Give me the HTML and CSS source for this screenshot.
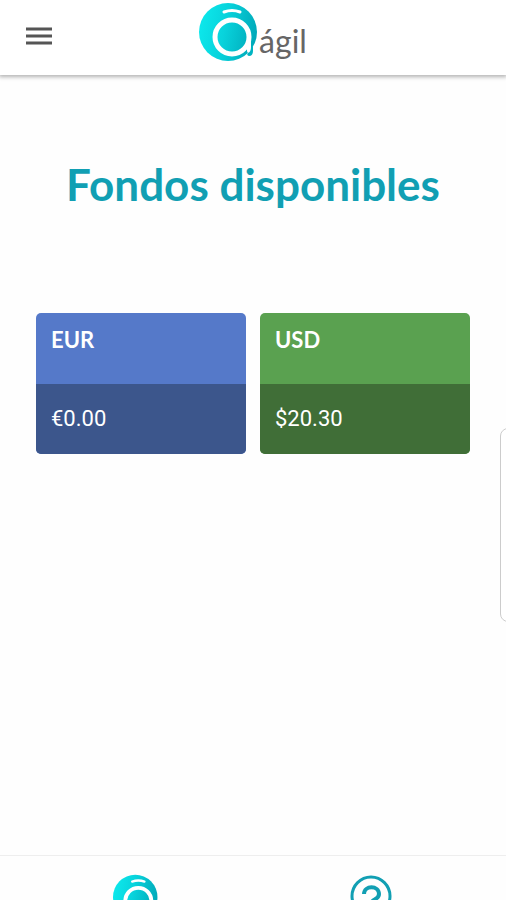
FILE: index.html
```html
<!DOCTYPE html>
<html lang="es">
<head>
    <meta charset="UTF-8">
    <meta name="viewport" content="width=device-width, initial-scale=1">
    <title>Fondos disponibles</title>
    <link rel="stylesheet" href="styles.css">
</head>
<body>
<header class="topbar">
    <button class="menu" type="button" aria-label="Menú">
        <svg width="26" height="18" viewBox="0 0 26 18"><path d="M0 2h26M0 9h26M0 16h26" stroke="#555" stroke-width="3"/></svg>
    </button>
    <a class="brand" href="#">
        <svg width="60" height="60" viewBox="0 0 60 60" aria-hidden="true">
            <defs>
                <linearGradient id="aqua" x1="0" y1="0.3" x2="1" y2="0.5">
                    <stop offset="0" stop-color="#0ce9ec"/>
                    <stop offset="0.45" stop-color="#08d3dc"/>
                    <stop offset="1" stop-color="#00a9b9"/>
                </linearGradient>
            </defs>
            <g id="logo">
                <circle cx="29" cy="30" r="29" fill="url(#aqua)"/>
                <path d="M25 10q8-3 16 0" fill="none" stroke="#fff" stroke-width="3" stroke-linecap="round"/>
                <circle cx="33" cy="35" r="17" fill="none" stroke="#fff" stroke-width="5"/>
                <path d="M50 35v14" fill="none" stroke="#fff" stroke-width="4" stroke-linecap="round"/>
                <path d="M54 44v5q0 5-4 5-3-1-1-3 3-1 3-6z" fill="#00b4c2"/>
            </g>
        </svg>
        <span class="name">ágil</span>
    </a>
</header>
<main class="content">
    <h1 class="title">Fondos disponibles</h1>
    <div class="funds">
        <section class="fund eur">
            <h2 class="currency">EUR</h2>
            <p class="amount">€0.00</p>
        </section>
        <section class="fund usd">
            <h2 class="currency">USD</h2>
            <p class="amount">$20.30</p>
        </section>
    </div>
</main>
<aside class="drawer"></aside>
<nav class="tabs">
    <a class="tab" href="#" aria-label="Inicio">
        <svg width="46" height="46" viewBox="0 0 60 60"><use href="#logo"/></svg>
    </a>
    <a class="tab" href="#" aria-label="Ayuda">
        <svg width="42" height="42" viewBox="0 0 42 42" fill="none" stroke="#119fb3" stroke-width="3">
            <circle cx="21" cy="22" r="19"/>
            <path d="M14 20c0-9 15-9 15 0 0 6-8 5-8 10M21 32v3" stroke-width="4"/>
        </svg>
    </a>
</nav>
</body>
</html>
```
FILE: styles.css
```css
*{
    margin: 0;
    padding: 0;
    box-sizing: border-box;
}
body{
    display: flex;
    flex-direction: column;
    height: 100vh;
    overflow: hidden;
    background: #fefefe;
    font-family: Lato, "Open Sans", sans-serif;
}
svg{
    display: block;
}
a{
    text-decoration: none;
}
.topbar{
    display: grid;
    grid-template-columns: 1fr auto 1fr;
    align-items: start;
    height: 75px;
    padding: 2px 26px 0;
    background: #fff;
    box-shadow: 0 1px 4px 1px rgba(0,0,0,0.3);
}
.menu{
    justify-self: start;
    margin-top: 25px;
    border: 0;
    background: none;
    cursor: pointer;
}
.brand{
    display: flex;
    align-items: flex-start;
    color: #666;
}
.name{
    padding-top: 20px;
    font-size: 32px;
    line-height: 38px;
}
.content{
    flex: 1;
    padding: 83px 36px 0;
}
.title{
    color: #119fb3;
    font-size: 44px;
    line-height: 52px;
    text-align: center;
    white-space: nowrap;
}
.funds{
    display: grid;
    grid-template-columns: 1fr 1fr;
    gap: 14px;
    margin-top: 103px;
}
.fund{
    border-radius: 5px;
    overflow: hidden;
    color: #fff;
}
.currency{
    height: 71px;
    padding: 13px 15px;
    font-size: 22px;
    line-height: 28px;
}
.amount{
    height: 70px;
    padding: 21px 15px;
    font-family: Roboto, sans-serif;
    font-size: 22px;
    line-height: 28px;
}
.eur{
    background: #5579c9;
}
.eur .amount{
    background: #3c568c;
}
.usd{
    background: #5aa150;
}
.usd .amount{
    background: #406e37;
}
/* edge of the closed side drawer */
.drawer{
    position: fixed;
    top: 428px;
    right: -14px;
    width: 20px;
    height: 194px;
    border: 1px solid #ccc;
    border-radius: 8px;
    background: #fff;
}
.tabs{
    display: flex;
    height: 45px;
    padding: 0 18px;
    border-top: 1px solid #eee;
    overflow: hidden;
}
.tab{
    flex: 1;
    display: flex;
    justify-content: center;
    padding-top: 18px;
}
```
